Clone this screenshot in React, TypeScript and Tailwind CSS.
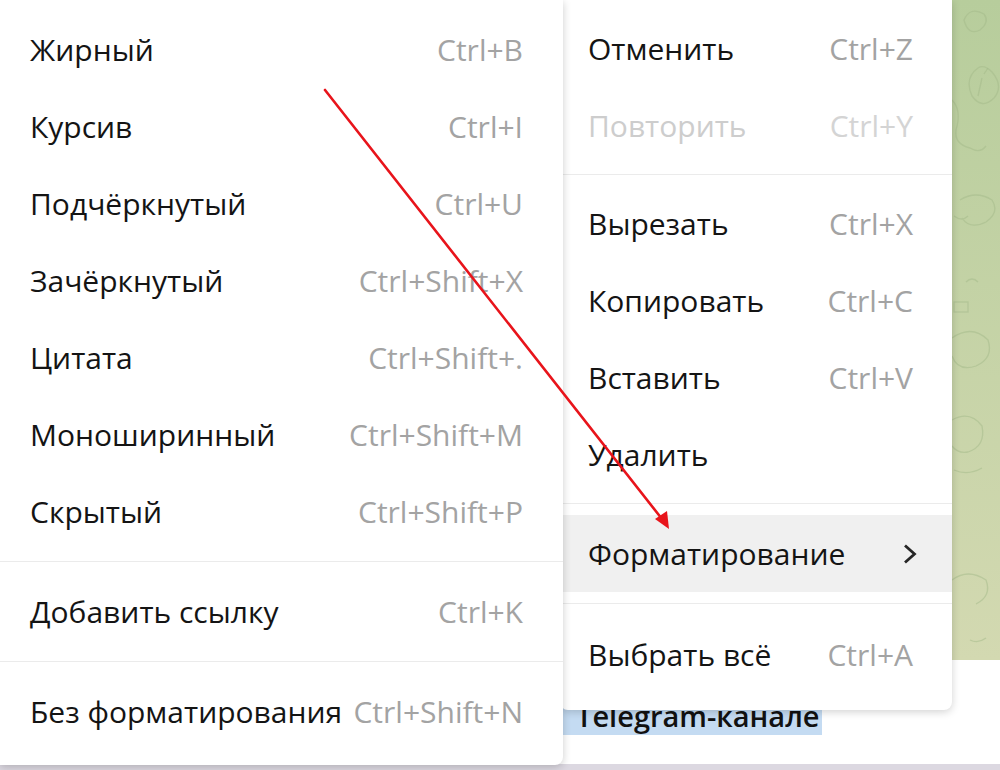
import React from 'react'

type Item = { label: string; shortcut?: string; disabled?: boolean; active?: boolean; submenu?: boolean }

const formatItems: Item[] = [
  { label: 'Жирный', shortcut: 'Ctrl+B' },
  { label: 'Курсив', shortcut: 'Ctrl+I' },
  { label: 'Подчёркнутый', shortcut: 'Ctrl+U' },
  { label: 'Зачёркнутый', shortcut: 'Ctrl+Shift+X' },
  { label: 'Цитата', shortcut: 'Ctrl+Shift+.' },
  { label: 'Моноширинный', shortcut: 'Ctrl+Shift+M' },
  { label: 'Скрытый', shortcut: 'Ctrl+Shift+P' },
]

function MenuRow({ item, padL, padR }: { item: Item; padL: string; padR: string }) {
  return (
    <div
      className={`flex h-[77px] items-center justify-between ${padL} ${padR} ${
        item.active ? 'bg-[#f0f0f0]' : ''
      }`}
    >
      <span className={item.disabled ? 'text-[#cdcdcd]' : 'text-[#141414]'}>{item.label}</span>
      {item.submenu ? (
        <svg width="16" height="24" viewBox="0 0 16 24" className="mr-[-5px]">
          <path d="M3 3.5 L12.5 12 L3 20.5" fill="none" stroke="#262626" strokeWidth="2.8" />
        </svg>
      ) : (
        item.shortcut && (
          <span className={item.disabled ? 'text-[#d4d4d4]' : 'text-[#a3a3a3]'}>{item.shortcut}</span>
        )
      )}
    </div>
  )
}

function Separator({ className }: { className: string }) {
  return (
    <div className={className}>
      <div className="h-px bg-[#ebebeb]" />
    </div>
  )
}

export default function App() {
  return (
    <div
      className="relative h-[770px] w-[1000px] overflow-hidden bg-white text-[30px] leading-none"
      style={{ fontFamily: '"Open Sans", "Noto Sans", sans-serif' }}
    >
      {/* chat behind the menus */}
      <div className="flex h-full flex-col">
        <div className="relative h-[660px] bg-gradient-to-b from-[#b7cd9c] to-[#d3d9b1]">
          <svg className="absolute right-0 top-0" width="50" height="660" viewBox="0 0 50 660" fill="none" stroke="#a3b989" strokeOpacity="0.5" strokeWidth="1.3">
            <path d="M14 20 q6 -14 20 -6 q6 8 -4 16 q-12 6 -16 -10 z" />
            <path d="M28 68 q-14 10 -6 28 q10 14 22 2 q10 -12 -2 -26 q-8 -8 -14 -4 z" />
            <path d="M32 78 l-4 18 M34 74 l4 -6" />
            <path d="M2 100 q10 10 4 30 q-2 14 14 18 q10 6 16 -2" />
            <path d="M10 200 q16 -10 32 0 q8 12 -6 22 q-16 8 -24 -4 M4 216 q8 6 14 0" />
            <path d="M16 282 q6 -6 12 0" />
            <rect x="4" y="302" width="14" height="10" />
            <path d="M2 338 q20 -14 36 2 q6 18 -12 26 q-18 6 -24 -10" />
            <path d="M2 420 q18 -10 30 6 q4 20 -14 26 q-10 2 -16 -6" />
            <path d="M4 470 q14 6 28 -2" />
            <path d="M2 580 q16 -12 34 0 q6 16 -10 24" />
            <path d="M20 640 q8 4 16 -2" />
          </svg>
        </div>
        <div className="flex-1 bg-white pl-[563px] pt-[40px]">
          <span className="bg-[#c4dbf2] pl-[13px] pr-[2px] text-[29px] font-semibold leading-[32px] text-[#111]">
            Telegram-канале
          </span>
        </div>
        <div className="h-[6px] bg-[#dcd8e1]" />
      </div>

      {/* edit context menu */}
      <div className="absolute left-[560px] top-0 w-[392px] rounded-b-[8px] bg-white pb-[17px] pt-[10px] shadow-[0_2px_8px_rgba(0,0,0,0.18)]">
        <MenuRow item={{ label: 'Отменить', shortcut: 'Ctrl+Z' }} padL="pl-[28px]" padR="pr-[39px]" />
        <MenuRow item={{ label: 'Повторить', shortcut: 'Ctrl+Y', disabled: true }} padL="pl-[28px]" padR="pr-[39px]" />
        <Separator className="py-[10px]" />
        <MenuRow item={{ label: 'Вырезать', shortcut: 'Ctrl+X' }} padL="pl-[28px]" padR="pr-[39px]" />
        <MenuRow item={{ label: 'Копировать', shortcut: 'Ctrl+C' }} padL="pl-[28px]" padR="pr-[39px]" />
        <MenuRow item={{ label: 'Вставить', shortcut: 'Ctrl+V' }} padL="pl-[28px]" padR="pr-[39px]" />
        <MenuRow item={{ label: 'Удалить' }} padL="pl-[28px]" padR="pr-[39px]" />
        <Separator className="pb-[11px] pt-[10px]" />
        <MenuRow item={{ label: 'Форматирование', active: true, submenu: true }} padL="pl-[28px]" padR="pr-[39px]" />
        <Separator className="pb-[12px] pt-[11px]" />
        <MenuRow item={{ label: 'Выбрать всё', shortcut: 'Ctrl+A' }} padL="pl-[28px]" padR="pr-[39px]" />
      </div>

      {/* formatting submenu */}
      <div className="absolute left-0 top-0 w-[563px] rounded-br-[8px] bg-white pb-[15px] pt-[11px] shadow-[0_2px_8px_rgba(0,0,0,0.2)]">
        {formatItems.map((item) => (
          <MenuRow key={item.label} item={item} padL="pl-[30px]" padR="pr-[40px]" />
        ))}
        <Separator className="py-[11px]" />
        <MenuRow item={{ label: 'Добавить ссылку', shortcut: 'Ctrl+K' }} padL="pl-[30px]" padR="pr-[40px]" />
        <Separator className="py-[11px]" />
        <MenuRow item={{ label: 'Без форматирования', shortcut: 'Ctrl+Shift+N' }} padL="pl-[30px]" padR="pr-[40px]" />
      </div>

      {/* annotation arrow */}
      <svg className="pointer-events-none absolute left-0 top-0" width="1000" height="770" viewBox="0 0 1000 770">
        <line x1="325" y1="90" x2="662" y2="519" stroke="#e8141b" strokeWidth="2.6" strokeLinecap="round" />
        <path d="M669 529 L655 519 L667 511 Z" fill="#e8141b" />
      </svg>
    </div>
  )
}
